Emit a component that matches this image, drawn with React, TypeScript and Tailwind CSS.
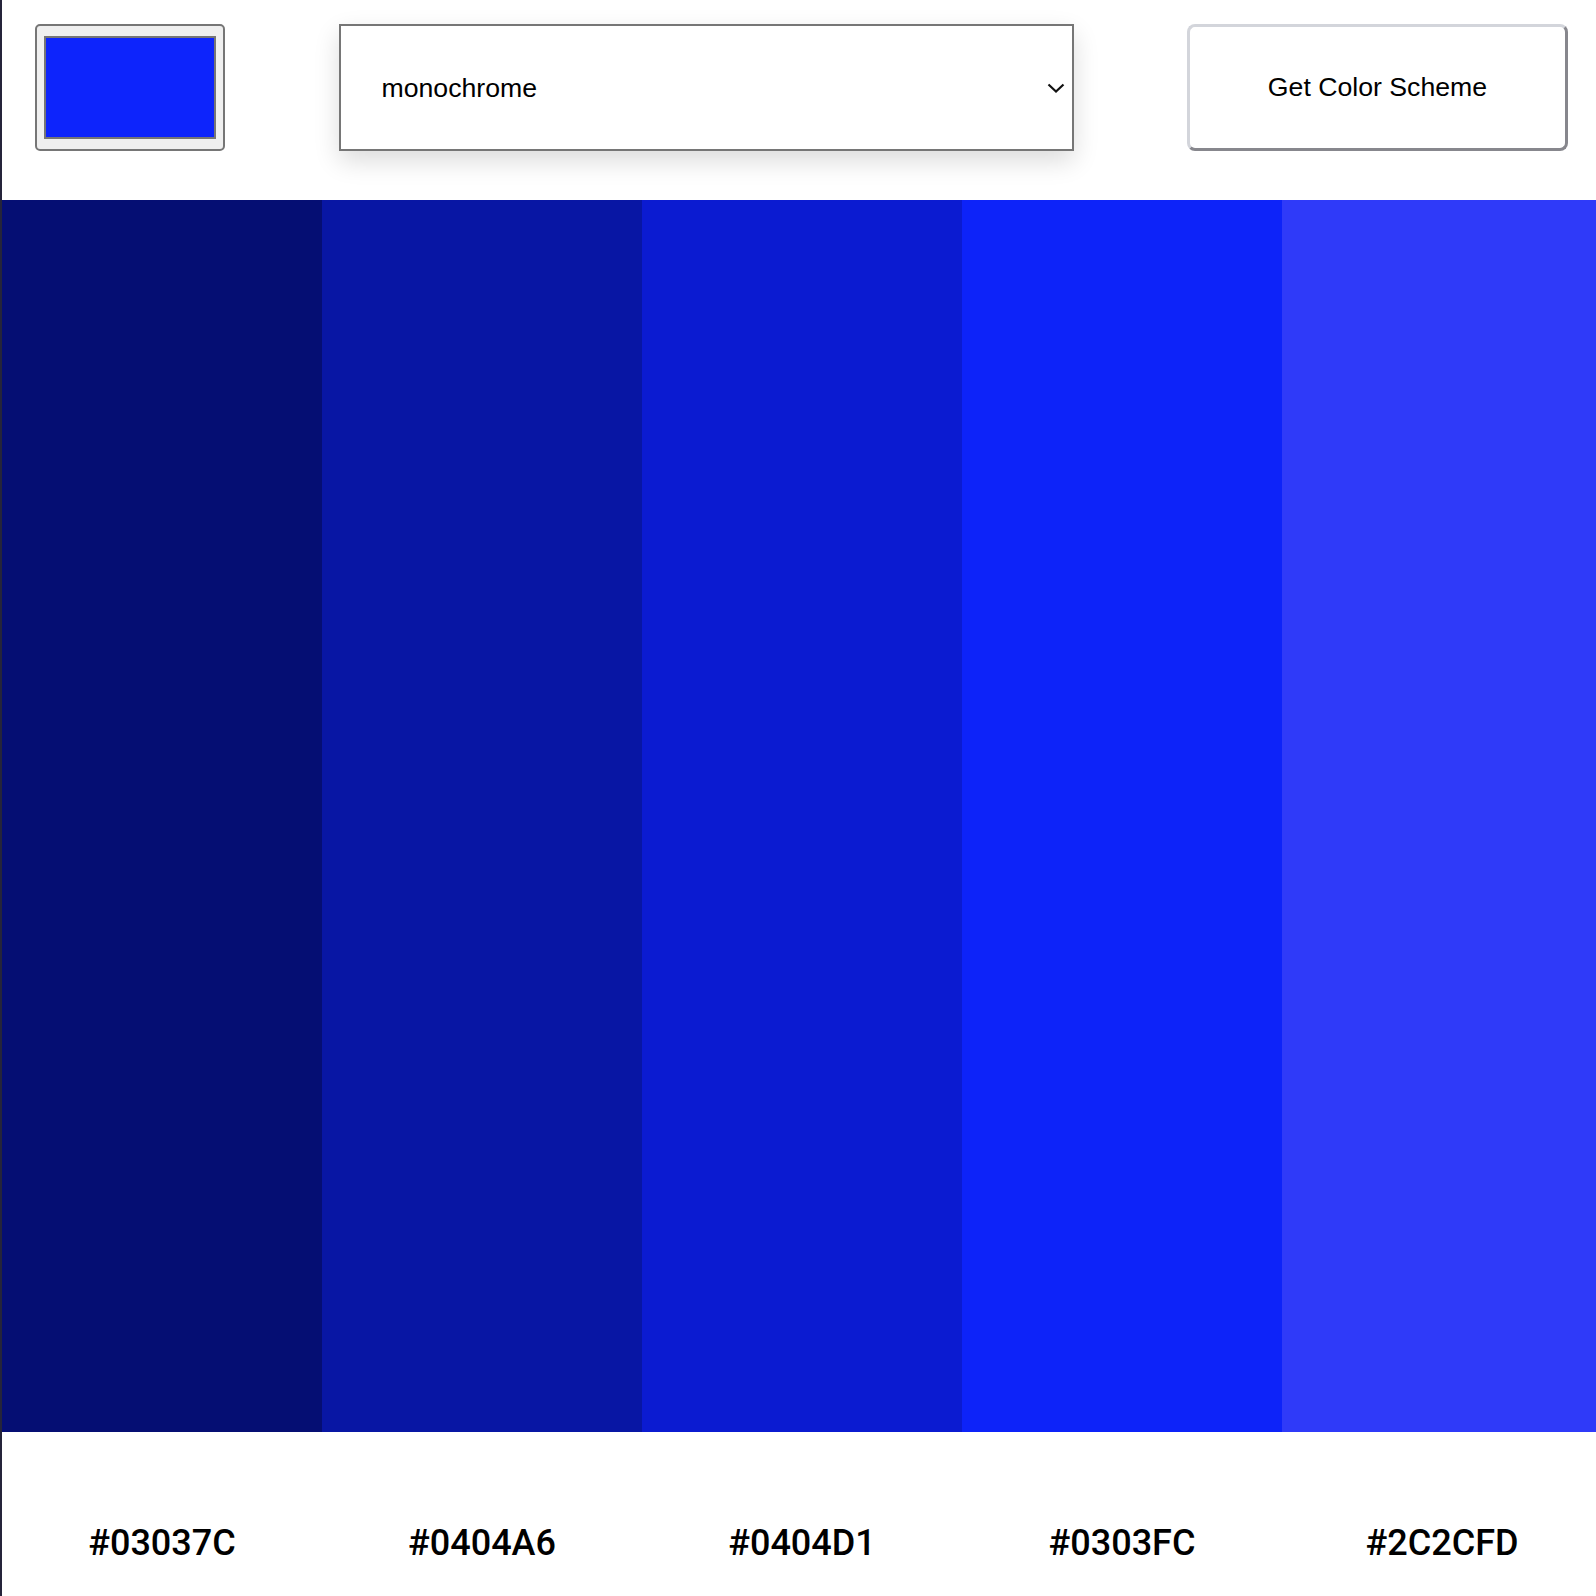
import React from 'react';

const scheme = [
  { hex: '#03037C', shown: '#050e73' },
  { hex: '#0404A6', shown: '#0816a4' },
  { hex: '#0404D1', shown: '#0b1bd1' },
  { hex: '#0303FC', shown: '#0d23f9' },
  { hex: '#2C2CFD', shown: '#2f3af9' },
];

export default function App() {
  return (
    <div className="min-h-[1596px] w-[1596px] overflow-hidden border-l-2 border-[#25243a] bg-white font-['Liberation_Sans',Arial,sans-serif] text-black">
      <header className="flex h-[200px] items-start justify-between pl-[33px] pr-[28px] pt-[24px]">
        <ColorInput />
        <ModeSelect />
        <button className="h-[127px] w-[381px] rounded-[8px] border-[3px] border-t-[#d3d5db] border-l-[#d3d5db] border-r-[#87878d] border-b-[#87878d] bg-white pb-[2px] text-[26.67px] text-black">
          Get Color Scheme
        </button>
      </header>

      <div className="grid h-[1232px] w-[1600px] grid-cols-5">
        {scheme.map((c) => (
          <div key={c.hex} className="h-full" style={{ backgroundColor: c.shown }} />
        ))}
      </div>

      <div className="grid w-[1600px] grid-cols-5 pt-[87px] pb-[40px]">
        {scheme.map((c) => (
          <p key={c.hex} className="text-center font-['Roboto',sans-serif] text-[36px] font-medium leading-[48px]">
            {c.hex}
          </p>
        ))}
      </div>
    </div>
  );
}

function ColorInput() {
  return (
    <div className="flex h-[127px] w-[190px] rounded-[5px] border-2 border-[#767676] bg-[#efefef] px-[7px] py-[10px]">
      <div className="flex-1 border-2 border-[#767676] bg-[#0d24fc]" />
    </div>
  );
}

function ModeSelect() {
  return (
    <div className="flex h-[127px] w-[735px] items-center justify-between border-2 border-[#767676] bg-white pl-[41px] pr-[7px] shadow-[0_10px_24px_rgba(0,0,0,0.14)]">
      <span className="text-[26.67px]">monochrome</span>
      <svg width="18" height="12" viewBox="0 0 18 12" fill="none">
        <path d="M1.5 2.5 L9 9.5 L16.5 2.5" stroke="#111" strokeWidth="2.2" />
      </svg>
    </div>
  );
}
